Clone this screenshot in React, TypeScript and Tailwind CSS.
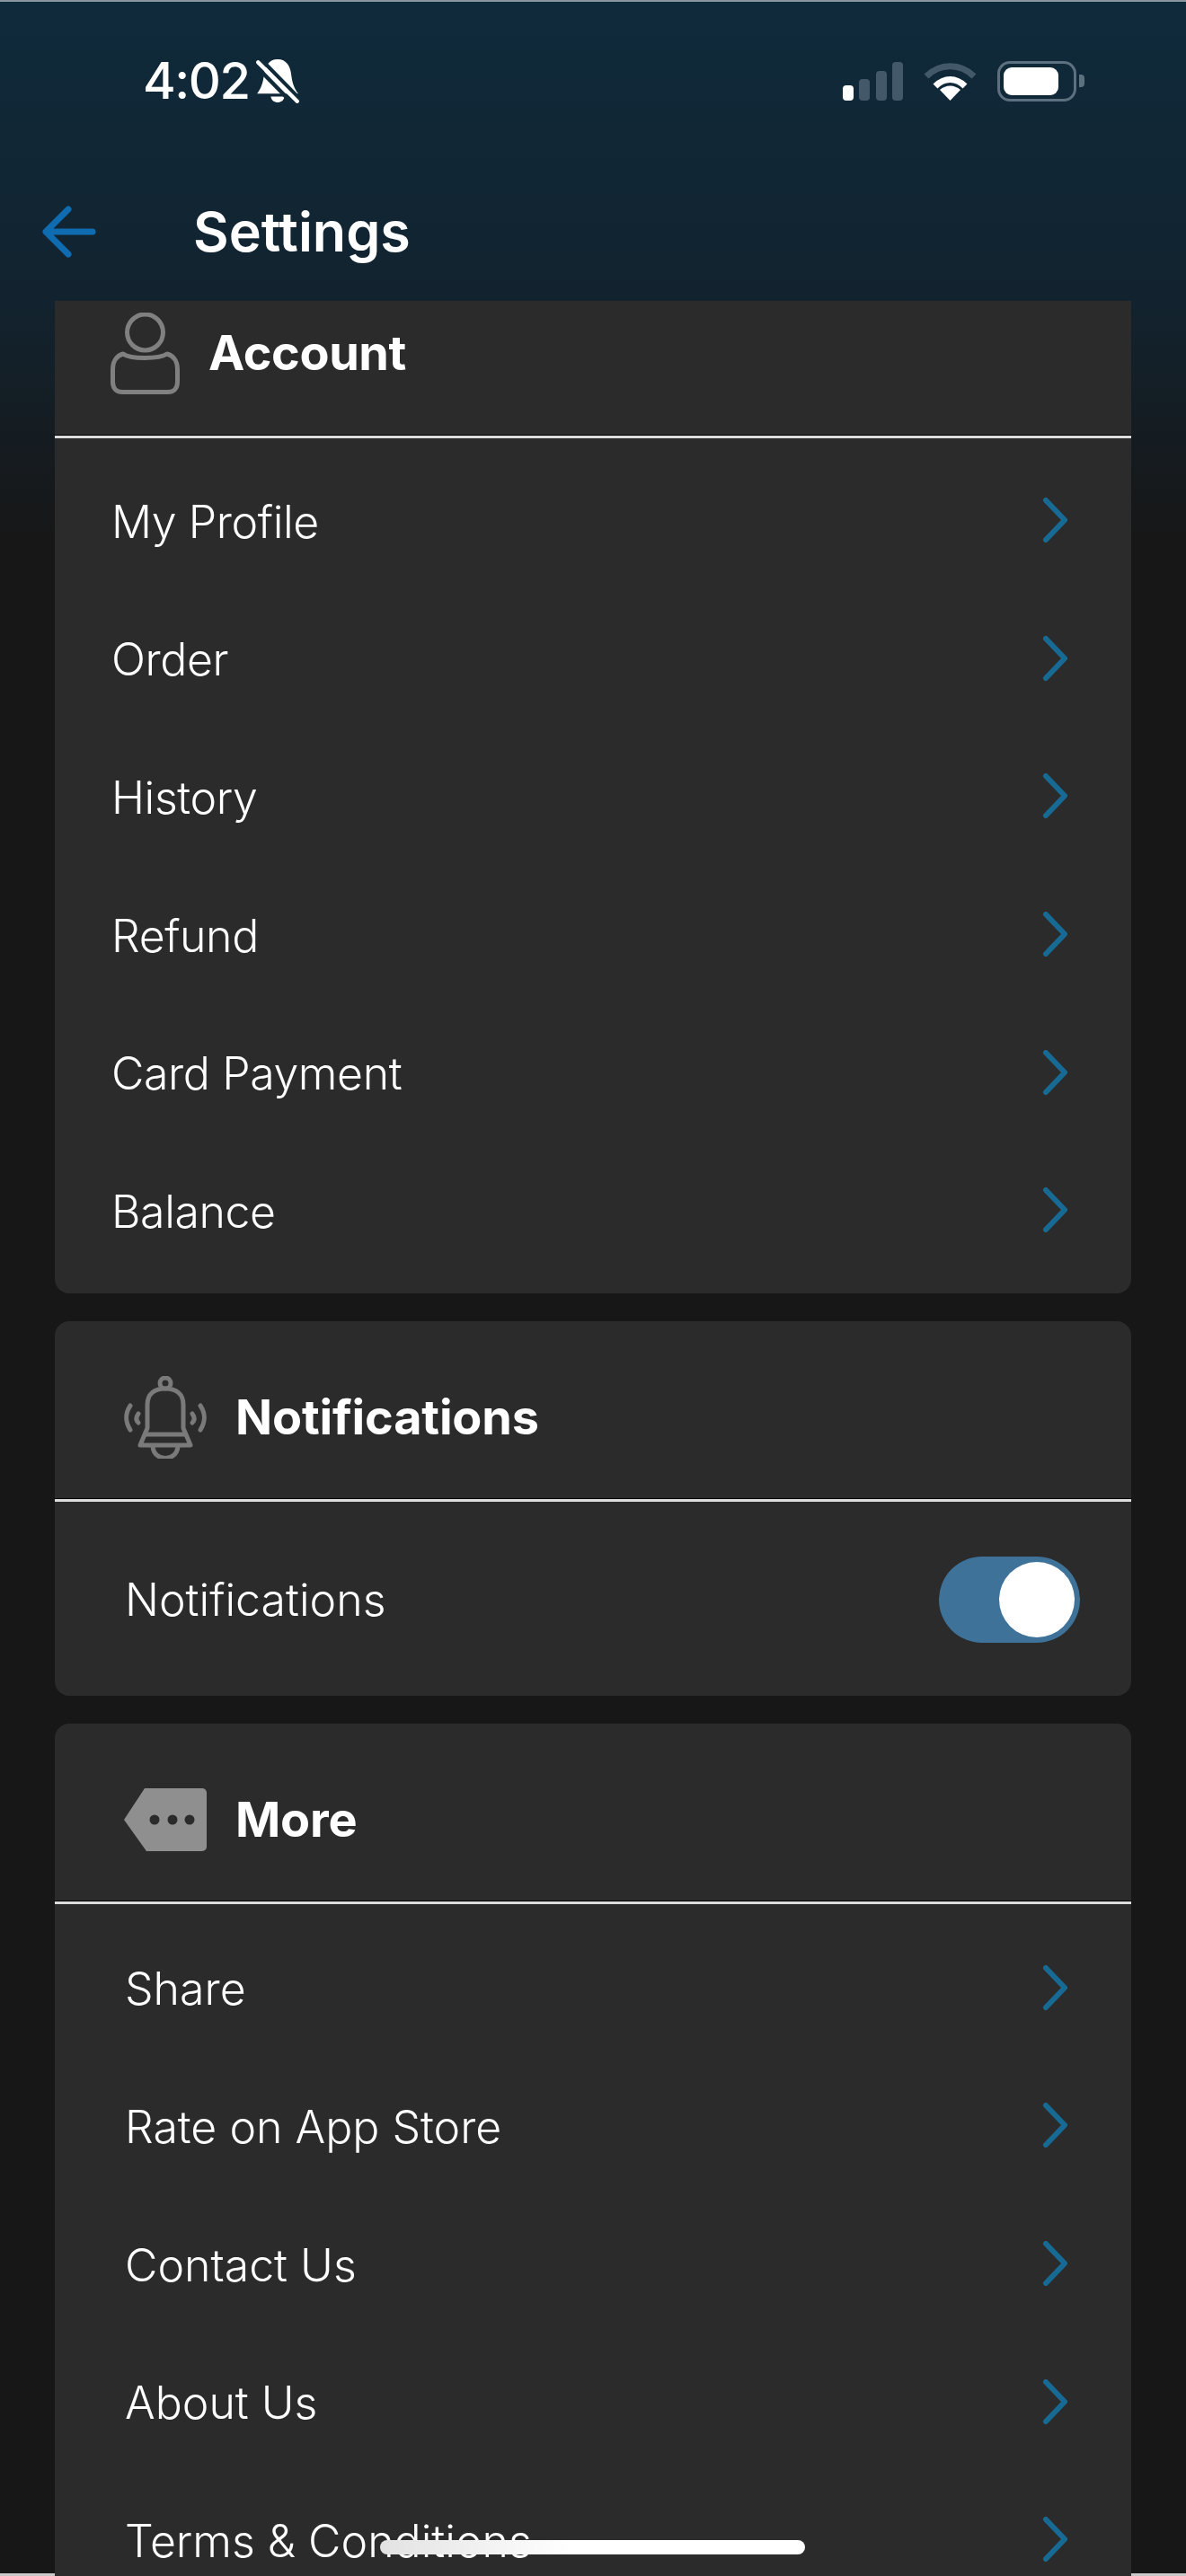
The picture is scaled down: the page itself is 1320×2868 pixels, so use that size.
import React from "react";

const Chevron = () => (
  <svg width="28" height="50" viewBox="0 0 28 50" fill="none" className="mb-[3px] shrink-0">
    <path d="M4 3 L25 25 L4 47" stroke="#176a94" strokeWidth="6" strokeLinecap="round" strokeLinejoin="round" />
  </svg>
);

const Row = ({ label, tight }: { label: string; tight?: boolean }) => (
  <div className="flex h-[153.6px] items-center justify-between pr-[71px]">
    <span className={tight ? "text-[50px] font-light leading-none tracking-[-0.4px] text-white" : "text-[50px] font-light leading-none text-white"}>{label}</span>
    <Chevron />
  </div>
);

const Divider = () => <div className="h-[4px] border-t border-black bg-[#dcdcdc]" />;

const PersonIcon = () => (
  <svg width="77" height="91" viewBox="0 0 77 91" fill="none">
    <ellipse cx="38.5" cy="22" rx="20" ry="20" stroke="#808080" strokeWidth="5" />
    <path d="M2.5 63 C2.5 54 7 48 14 46 C22 52 54 52 63 46 C70 48 74.5 54 74.5 63 V77 C74.5 84 71 88.5 64 88.5 H13 C6 88.5 2.5 84 2.5 77 Z" stroke="#808080" strokeWidth="5" strokeLinejoin="round" />
  </svg>
);

const BellIcon = () => (
  <svg width="92" height="92" viewBox="0 0 92 92" fill="none" stroke="#7a7a7a" strokeWidth="5" strokeLinecap="round" strokeLinejoin="round">
    <circle cx="46" cy="8" r="6" />
    <path d="M26 58 V32 C26 20 34 14 46 14 C58 14 66 20 66 32 V58 L74 77 H18 Z" />
    <path d="M24 65 H68" />
    <path d="M32 78 C33 96 59 96 60 78" />
    <path d="M7 33 C1 42 1 50 7 60" />
    <path d="M16 42 C13 46 13 49 16 52" />
    <path d="M85 33 C91 42 91 50 85 60" />
    <path d="M76 42 C79 46 79 49 76 52" />
  </svg>
);

const MoreIcon = () => (
  <svg width="92" height="70" viewBox="0 0 92 70">
    <path d="M23 0 H87 A5 5 0 0 1 92 5 V65 A5 5 0 0 1 87 70 H25 L0 35 Z" fill="#8f8f8f" />
    <circle cx="34" cy="35" r="5.5" fill="#2b2b2b" />
    <circle cx="54" cy="35" r="5.5" fill="#2b2b2b" />
    <circle cx="73" cy="35" r="5.5" fill="#2b2b2b" />
  </svg>
);

const BellSlash = () => (
  <svg width="50" height="50" viewBox="0 0 44 46" fill="none">
    <path d="M22 1 C13 1 9 8 8 17 C7 25 5 31 1 36 H43 C39 31 37 25 36 17 C35 8 31 1 22 1 Z" fill="#fff" />
    <path d="M15 39 H29 C28 47 16 47 15 39 Z" fill="#fff" />
    <path d="M5 1 L46 43" stroke="#102a3a" strokeWidth="4" />
    <path d="M-1 7 L40 49" stroke="#102a3a" strokeWidth="4" />
    <path d="M2 4 L42 44" stroke="#fff" strokeWidth="4" strokeLinecap="round" />
  </svg>
);

const SignalIcon = () => (
  <svg width="67" height="43" viewBox="0 0 67 43">
    <rect x="0" y="26" width="12" height="17" rx="4" fill="#fff" />
    <rect x="18" y="19" width="12" height="24" rx="4" fill="#43596a" />
    <rect x="37" y="10" width="12" height="33" rx="4" fill="#43596a" />
    <rect x="55" y="0" width="12" height="43" rx="4" fill="#43596a" />
  </svg>
);

const WifiIcon = () => (
  <svg width="59" height="43" viewBox="0 0 59 43" fill="none">
    <path d="M3 16 C18 1 41 1 56 16" stroke="#43596a" strokeWidth="7" />
    <path d="M13 27 C23 17 36 17 46 27" stroke="#fff" strokeWidth="7" />
    <path d="M29.5 43 L18 31 C25 25 34 25 41 31 Z" fill="#fff" />
  </svg>
);

const BatteryIcon = () => (
  <div className="flex items-center gap-[3px]">
    <div className="flex h-[45px] w-[88px] items-center rounded-[14px] border-[3px] border-[#5d7080] pl-[4px]">
      <div className="h-[31px] w-[61px] rounded-[9px] bg-white" />
    </div>
    <div className="h-[14px] w-[6px] rounded-r-[4px] bg-[#5d7080]" />
  </div>
);

const Toggle = () => (
  <div className="flex h-[96px] w-[157px] items-center justify-end rounded-full bg-[#3f7299] pr-[6px]">
    <div className="h-[84px] w-[84px] rounded-full bg-white" />
  </div>
);

export default function App() {
  return (
    <div
      className="relative flex h-[2868px] w-[1320px] flex-col overflow-hidden bg-[linear-gradient(180deg,#0f2a3b_0px,#12232f_330px,#171717_600px)] text-white"
      style={{ fontFamily: "Inter, 'Noto Sans', sans-serif" }}
    >
      <div className="h-[2px] bg-[#8a97a0]" />
      <header className="h-[333px] shrink-0">
        <div className="mt-[65px] flex h-[46px] items-center justify-between pl-[159px] pr-[113px]">
          <div className="flex items-center gap-[7px]">
            <span className="text-[56px] font-medium leading-none tracking-[-1.5px]">4:02</span>
            <BellSlash />
          </div>
          <div className="flex items-center gap-[23px]">
            <SignalIcon />
            <WifiIcon />
            <BatteryIcon />
          </div>
        </div>
        <div className="mt-[115px] flex h-[60px] items-center gap-[108px] pl-[47px]">
          <svg width="60" height="58" viewBox="0 0 60 58" fill="none">
            <path d="M56 29 H5 M29 4 L4 29 L29 54" stroke="#0f6cb0" strokeWidth="7" strokeLinecap="round" strokeLinejoin="round" />
          </svg>
          <h1 className="text-[61px] font-semibold leading-none">Settings</h1>
        </div>
      </header>

      <main className="relative z-10 flex min-h-0 flex-1 flex-col gap-[31px] overflow-hidden px-[61px]">
        <section className="shrink-0 rounded-b-[16px] bg-[#2b2b2b] pb-[14px]">
          <div className="flex h-[149px] items-center gap-[32px] pb-[33px] pl-[62px]">
            <PersonIcon />
            <h2 className="text-[54px] font-bold leading-none tracking-[-0.4px]">Account</h2>
          </div>
          <Divider />
          <div className="pl-[63px] pt-[16px]">
            {["My Profile", "Order", "History", "Refund", "Card Payment", "Balance"].map((l) => (
              <Row key={l} label={l} tight />
            ))}
          </div>
        </section>

        <section className="shrink-0 rounded-[16px] bg-[#2b2b2b]">
          <div className="flex h-[197px] items-center gap-[32px] pl-[77px] pt-[18px]">
            <BellIcon />
            <h2 className="text-[54px] font-bold leading-none tracking-[-0.2px]">Notifications</h2>
          </div>
          <Divider />
          <div className="flex h-[216px] items-center justify-between pl-[78px] pr-[57px] pt-[3px]">
            <span className="text-[50px] font-light leading-none">Notifications</span>
            <Toggle />
          </div>
        </section>

        <section className="shrink-0 rounded-t-[16px] bg-[#2b2b2b]">
          <div className="flex h-[197px] items-center gap-[32px] pl-[77px] pt-[18px]">
            <MoreIcon />
            <h2 className="text-[54px] font-bold leading-none tracking-[-0.2px]">More</h2>
          </div>
          <Divider />
          <div className="pl-[78px] pt-[18px]">
            {["Share", "Rate on App Store", "Contact Us", "About Us", "Terms & Conditions"].map((l) => (
              <Row key={l} label={l} />
            ))}
          </div>
        </section>
      </main>

      <div className="absolute bottom-0 left-0 right-0 h-[3px] bg-[#c8c8c8]" />
      <div className="absolute left-[423px] top-[2828px] z-20 h-[16px] w-[473px] rounded-full bg-[linear-gradient(90deg,#e2e2e2,#ffffff_45%)]" />
    </div>
  );
}
